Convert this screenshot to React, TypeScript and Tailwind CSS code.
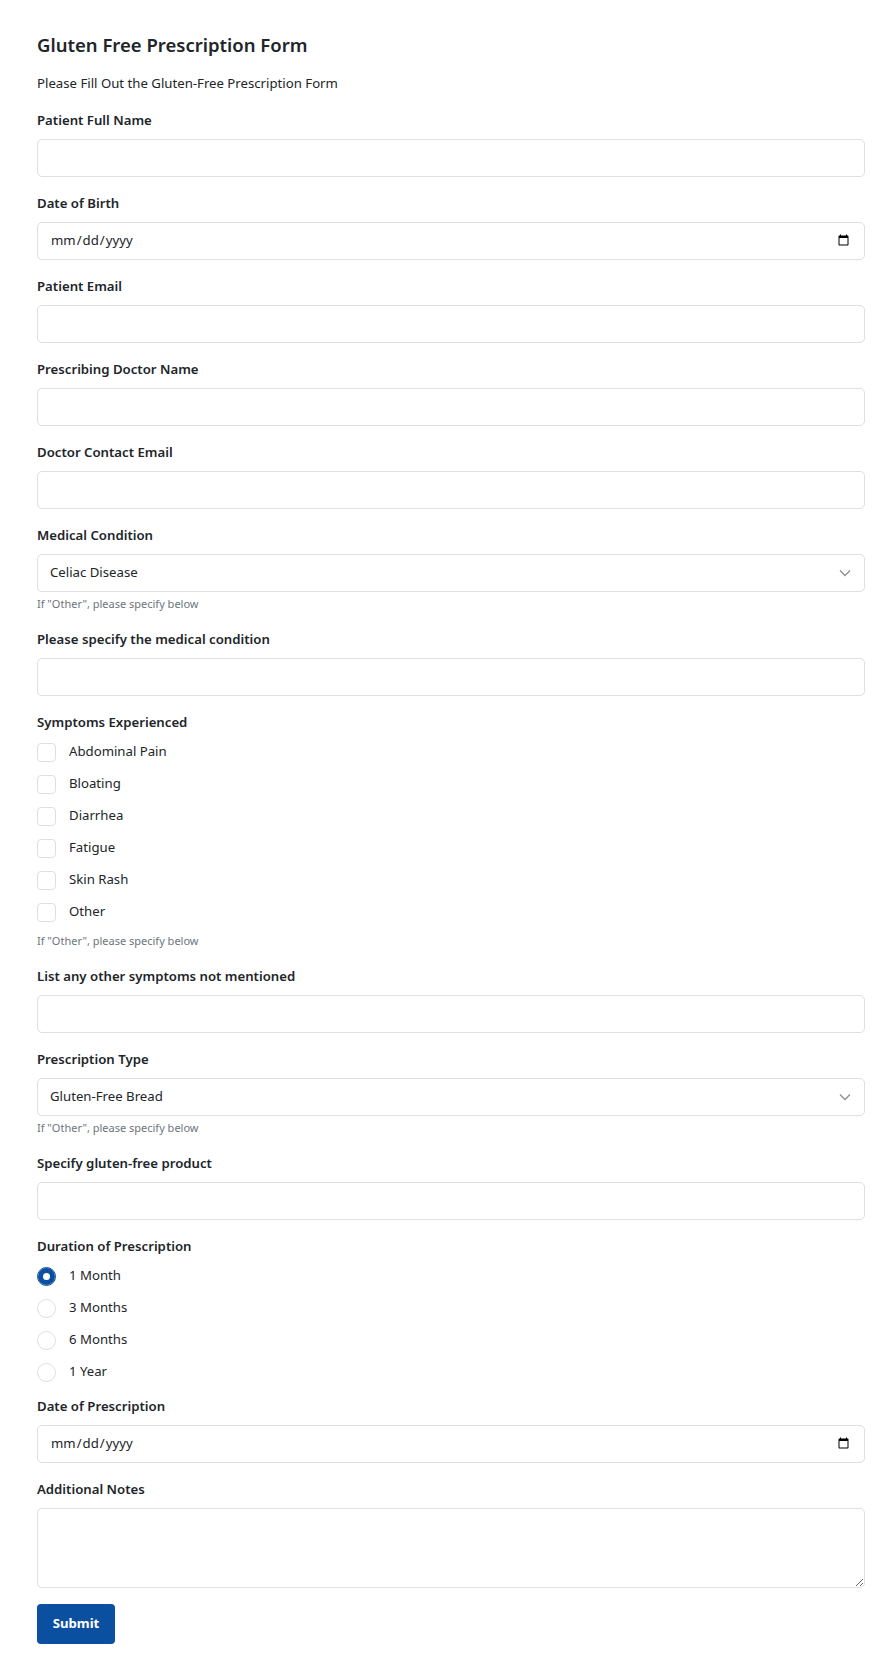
import React from "react";

const font = { fontFamily: '"Noto Sans", "Open Sans", sans-serif' };

const inputCls =
  "block w-full h-[38px] rounded-[5px] border border-[#dcdfe3] bg-white px-3 text-[13.2px] text-[#212529] outline-none";

const Label: React.FC<{ text: string; className?: string }> = ({ text, className }) => (
  <label className={"block text-[13.2px] leading-[21px] font-semibold text-[#212529] " + (className ?? "mb-2")}>
    {text}
  </label>
);

const Help: React.FC<{ className?: string }> = ({ className }) => (
  <p className={"text-[11px] leading-[18px] text-[#6c757d] " + (className ?? "mt-[3px]")}>
    If "Other", please specify below
  </p>
);

const TextField: React.FC<{ label: string; type?: string }> = ({ label, type = "text" }) => (
  <div className="mb-4">
    <Label text={label} />
    <input type={type} className={inputCls} />
  </div>
);

const SelectField: React.FC<{ label: string; options: string[] }> = ({ label, options }) => (
  <div className="mb-4">
    <Label text={label} />
    <div className="relative">
      <select className={inputCls + " appearance-none pr-10"} defaultValue={options[0]}>
        {options.map((o) => (
          <option key={o}>{o}</option>
        ))}
      </select>
      <svg
        className="pointer-events-none absolute right-[14px] top-1/2 -translate-y-1/2"
        width="12"
        height="8"
        viewBox="0 0 12 8"
        fill="none"
      >
        <path d="M1 1.5l5 5 5-5" stroke="#8a8f96" strokeWidth="1.3" />
      </svg>
    </div>
    <Help />
  </div>
);

const symptoms = ["Abdominal Pain", "Bloating", "Diarrhea", "Fatigue", "Skin Rash", "Other"];
const durations = ["1 Month", "3 Months", "6 Months", "1 Year"];

export default function App() {
  return (
    <div className="min-h-screen bg-white" style={font}>
      <form className="pl-[37px] pr-[27px] pt-8 pb-5" onSubmit={(e) => e.preventDefault()}>
        <h1 className="text-[18.5px] leading-[25px] font-semibold text-[#212529] mb-4">
          Gluten Free Prescription Form
        </h1>
        <p className="text-[13.2px] leading-[21px] text-[#212529] mb-4">
          Please Fill Out the Gluten-Free Prescription Form
        </p>

        <TextField label="Patient Full Name" />
        <TextField label="Date of Birth" type="date" />
        <TextField label="Patient Email" type="email" />
        <TextField label="Prescribing Doctor Name" />
        <TextField label="Doctor Contact Email" type="email" />
        <SelectField
          label="Medical Condition"
          options={["Celiac Disease", "Gluten Sensitivity", "Wheat Allergy", "Other"]}
        />
        <TextField label="Please specify the medical condition" />

        <div className="mb-4">
          <Label text="Symptoms Experienced" className="mb-[3px]" />
          {symptoms.map((s) => (
            <label key={s} className="flex h-8 items-center gap-[13px] text-[13.2px] text-[#212529]">
              <input
                type="checkbox"
                className="h-[19px] w-[19px] appearance-none rounded-[4px] border border-[#dcdfe3] bg-white checked:border-[#0b4fa0] checked:bg-[#0b4fa0]"
              />
              {s}
            </label>
          ))}
          <Help className="mt-1" />
        </div>

        <TextField label="List any other symptoms not mentioned" />
        <SelectField
          label="Prescription Type"
          options={["Gluten-Free Bread", "Gluten-Free Pasta", "Gluten-Free Flour", "Other"]}
        />
        <TextField label="Specify gluten-free product" />

        <div className="mb-2">
          <Label text="Duration of Prescription" className="mb-[3px]" />
          {durations.map((d, i) => (
            <label key={d} className="flex h-8 items-center gap-[13px] text-[13.2px] text-[#212529]">
              <input
                type="radio"
                name="duration"
                defaultChecked={i === 0}
                className="h-[19px] w-[19px] appearance-none rounded-full border border-[#dcdfe3] bg-white checked:border-[#0b4fa0] checked:shadow-[inset_0_0_0_5px_#0b4fa0]"
              />
              {d}
            </label>
          ))}
        </div>

        <TextField label="Date of Prescription" type="date" />

        <div className="mb-4">
          <Label text="Additional Notes" />
          <textarea className="block h-[80px] w-full rounded-[5px] border border-[#dcdfe3] bg-white px-3 py-2 text-[13.2px] outline-none" />
        </div>

        <button
          type="submit"
          className="h-10 w-[78px] rounded-[4px] bg-[#0b4fa0] text-[13.2px] font-bold text-white"
        >
          Submit
        </button>
      </form>
    </div>
  );
}
